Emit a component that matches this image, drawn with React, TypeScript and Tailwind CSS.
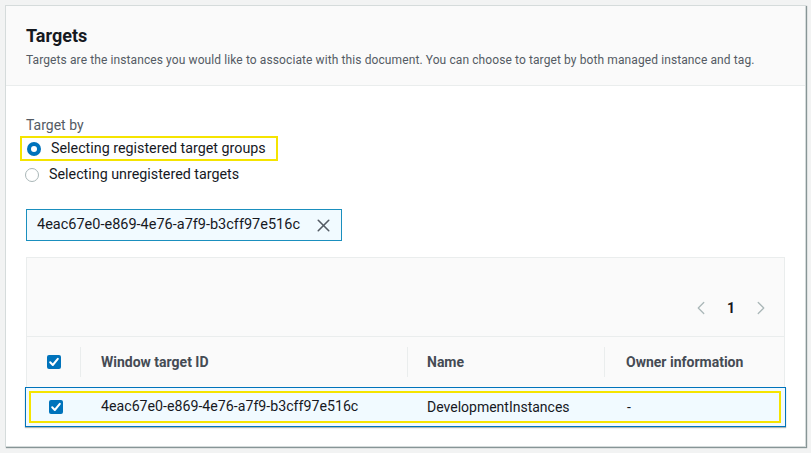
import { X, ChevronLeft, ChevronRight } from "lucide-react";

const font = { fontFamily: "Roboto, 'Liberation Sans', sans-serif" };
const TARGET_ID = "4eac67e0-e869-4e76-a7f9-b3cff97e516c";

function Checkbox() {
  return (
    <span className="w-[14px] h-[14px] rounded-[2px] bg-[#0073bb] flex items-center justify-center">
      <svg viewBox="0 0 14 14" className="w-[14px] h-[14px]">
        <path d="M3.2 7.3 L5.8 10 L10.8 3.8" fill="none" stroke="white" strokeWidth={2} strokeLinecap="round" strokeLinejoin="round" />
      </svg>
    </span>
  );
}

function Radio({ checked }: { checked?: boolean }) {
  return checked ? (
    <span className="w-[14px] h-[14px] rounded-full bg-[#0073bb] flex items-center justify-center">
      <span className="w-[6px] h-[6px] rounded-full bg-white" />
    </span>
  ) : (
    <span className="w-[14px] h-[14px] rounded-full border border-[#aab7b8] bg-white" />
  );
}

export default function App() {
  return (
    <div className="w-[811px] h-[453px] bg-[#f2f3f3] p-[5px] text-[#16191f]" style={font}>
      <div className="h-[442px] bg-white border border-[#d5dbdb] shadow-[1px_1px_1px_#879596] flex flex-col">
        {/* header */}
        <div className="h-[80px] bg-[#fafafa] border-b border-[#eaeded] px-[20px] pt-[19px]">
          <h2 className="text-[18px] font-bold leading-[22px]">Targets</h2>
          <p className="text-[12px] leading-[16px] mt-[5px] text-[#545b64] tracking-[0.1px]">
            Targets are the instances you would like to associate with this document. You can choose to target by both managed instance and tag.
          </p>
        </div>

        {/* body */}
        <div className="px-[20px] pt-[30px]">
          <div className="text-[14px] leading-[18px] text-[#545b64]">Target by</div>
          <div className="mt-[2px] -ml-[6px] w-[258px] h-[25px] border-2 border-[#f5e400] flex items-center gap-[10px] pl-[5px]">
            <Radio checked />
            <span className="text-[14.3px]">Selecting registered target groups</span>
          </div>
          <div className="h-[26px] flex items-center gap-[10px] -ml-[1px] pt-[1px]">
            <Radio />
            <span className="text-[14.3px]">Selecting unregistered targets</span>
          </div>

          <div className="mt-[22px] w-[316px] h-[32px] border border-[#1a8fbe] bg-[#f1faff] flex items-center justify-between pl-[10px] pr-[7px]">
            <span className="text-[14.5px]">{TARGET_ID}</span>
            <X className="w-[21px] h-[21px] text-[#545b64]" strokeWidth={1.8} />
          </div>

          {/* table */}
          <div className="mt-[16px] border border-[#eaeded] border-b-0">
            <div className="h-[79px] bg-[#fafafa] border-b border-[#eaeded] flex items-end justify-end pb-[17px] pr-[12px]">
              <div className="flex items-center gap-[15px]">
                <ChevronLeft className="w-[22px] h-[22px] text-[#aab7b8]" strokeWidth={1.4} />
                <span className="text-[14px] font-bold">1</span>
                <ChevronRight className="w-[22px] h-[22px] text-[#aab7b8]" strokeWidth={1.4} />
              </div>
            </div>
            <div className="h-[50px] bg-[#fafafa] flex items-center text-[14px] font-bold text-[#454b54]">
              <div className="w-[54px] flex items-center justify-center h-[30px] border-r border-[#eaeded]">
                <Checkbox />
              </div>
              <div className="w-[327px] pl-[20px] h-[30px] flex items-center border-r border-[#eaeded]">Window target ID</div>
              <div className="w-[197px] pl-[19px] h-[30px] flex items-center border-r border-[#eaeded]">Name</div>
              <div className="flex-1 pl-[21px]">Owner information</div>
            </div>
          </div>
          <div className="-mx-[1px] h-[40px] border border-[#0073bb] bg-[#f1faff] p-[3px] pr-[4px] shadow-[0_1px_1px_#aab7b8]">
            <div className="h-full border-2 border-[#f5e400] flex items-center text-[14px]">
              <div className="w-[50px] flex items-center justify-center">
                <Checkbox />
              </div>
              <div className="w-[327px] pl-[20px] text-[14.2px]">{TARGET_ID}</div>
              <div className="w-[199px] pl-[19px]">DevelopmentInstances</div>
              <div className="flex-1 pl-[20px]">-</div>
            </div>
          </div>
        </div>
      </div>
    </div>
  );
}
